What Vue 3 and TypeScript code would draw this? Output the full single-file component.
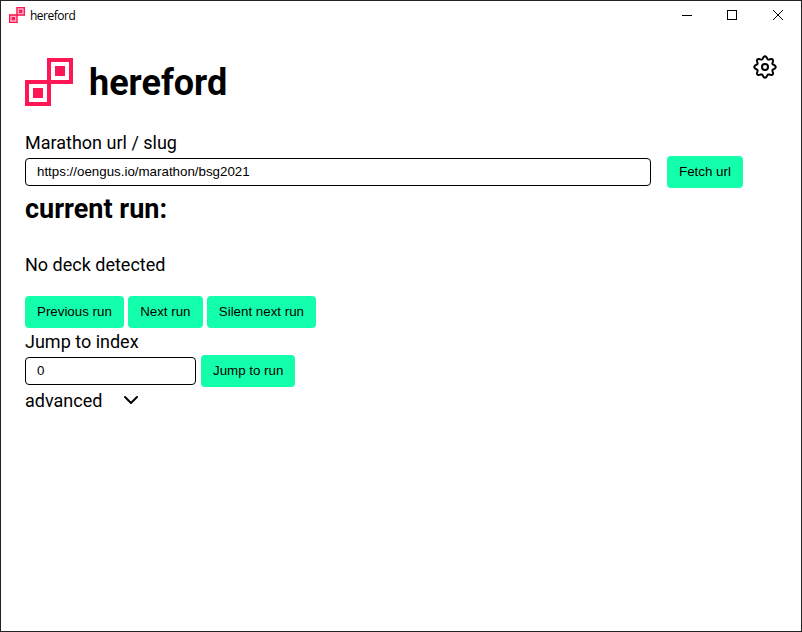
<script setup lang="ts">
import { ref } from 'vue'

const slug = ref<string>('https://oengus.io/marathon/bsg2021')
const index = ref<string>('0')
const runActions: string[] = ['Previous run', 'Next run', 'Silent next run']

// Outline of a cog with eight evenly spaced, rounded teeth.
const cogOutline: string = Array.from({ length: 96 }, (_, i) => {
  const angle = (i / 96) * Math.PI * 2
  const radius = 9.4 + 1.35 * Math.cos(8 * angle)
  return `${(12 + radius * Math.sin(angle)).toFixed(2)},${(12 - radius * Math.cos(angle)).toFixed(2)}`
}).join(' ')
</script>

<template>
  <div class="window">
    <header class="titlebar">
      <svg class="app-icon" viewBox="0 0 48 48">
        <path class="halo" d="M22 0h26v26H22zM0 22h26v26H0z" />
        <path class="frame" d="M24 2h22v22H24zM2 24h22v22H2z" />
        <path class="core" d="M30 8h10v10H30zM8 30h10v10H8z" />
      </svg>
      <span class="caption">hereford</span>
      <div class="controls">
        <svg viewBox="0 0 46 30" shape-rendering="crispEdges"><path d="M19 14.5h10" /></svg>
        <svg viewBox="0 0 46 30" shape-rendering="crispEdges"><path d="M18.5 9.5h9v9h-9z" /></svg>
        <svg viewBox="0 0 46 30"><path d="M18 9l10 10M28 9L18 19" /></svg>
      </div>
    </header>

    <main class="content">
      <div class="brand">
        <svg class="logo" viewBox="0 0 48 48" shape-rendering="crispEdges">
          <path class="frame" d="M24 2h22v22H24zM2 24h22v22H2z" />
          <path class="core" d="M30 8h10v10H30zM8 30h10v10H8z" />
        </svg>
        <h1>hereford</h1>
        <svg class="icon gear" viewBox="0 0 24 24">
          <circle cx="12" cy="12" r="3" />
          <polygon :points="cogOutline" />
        </svg>
      </div>

      <label class="label" for="slug">Marathon url / slug</label>
      <div class="row url-row">
        <input id="slug" v-model="slug" class="field" type="text" />
        <button class="btn">Fetch url</button>
      </div>

      <h2>current run:</h2>
      <p class="status">No deck detected</p>

      <div class="row actions">
        <button v-for="action in runActions" :key="action" class="btn">{{ action }}</button>
      </div>

      <label class="label jump-label" for="index">Jump to index</label>
      <div class="row jump-row">
        <input id="index" v-model="index" class="field" type="text" />
        <button class="btn">Jump to run</button>
      </div>

      <div class="advanced">
        <span>advanced</span>
        <svg class="icon chevron" viewBox="0 0 24 24"><polyline points="6 9 12 15 18 9" /></svg>
      </div>
    </main>
  </div>
</template>

<style>
body {
  margin: 0;
  background: #fff;
}
</style>

<style scoped>
.window {
  box-sizing: border-box;
  width: 802px;
  height: 632px;
  border: 1px solid #232225;
  background: #fff;
  color: #000;
  font-family: Roboto, sans-serif;
  font-size: 18px;
  overflow: hidden;
}
.titlebar {
  display: flex;
  align-items: center;
  height: 30px;
  padding-left: 8px;
}
.app-icon {
  width: 16px;
  height: 16px;
  margin-top: -2px;
}
.caption {
  margin-left: 5px;
  font: 12px/16px "Open Sans", "Noto Sans", sans-serif;
  letter-spacing: -0.5px;
}
.controls {
  display: flex;
  margin-left: auto;
}
.controls svg {
  width: 46px;
  height: 30px;
  fill: none;
  stroke: #000;
}
.frame {
  fill: none;
  stroke: #ff1654;
  stroke-width: 4;
}
.core {
  fill: #ff1654;
}
.halo {
  fill: #ffb3c6;
}
.content {
  padding: 27px 24px 0;
}
.brand {
  display: flex;
  height: 48px;
}
.logo {
  width: 48px;
  height: 48px;
}
h1 {
  margin: 0 0 0 16px;
  font-size: 36px;
  line-height: 50px;
  font-weight: 700;
}
.icon {
  width: 24px;
  height: 24px;
  fill: none;
  stroke: #000;
  stroke-width: 2;
  stroke-linecap: round;
  stroke-linejoin: round;
}
.gear {
  margin: -3px 0 0 auto;
}
.label {
  display: block;
  margin-top: 26px;
  line-height: 22px;
}
.row {
  display: flex;
  align-items: center;
  height: 32px;
}
.url-row {
  margin-top: 2px;
  gap: 16px;
}
.url-row .field {
  width: 626px;
}
.field {
  box-sizing: border-box;
  height: 28px;
  margin: 0;
  padding: 0 11px 1px;
  border: 1px solid #000;
  border-radius: 4px;
  background: #fff;
  color: #000;
  font: 13.333px "Liberation Sans", Arial, sans-serif;
}
.btn {
  height: 32px;
  margin: 0;
  padding: 0 12px 1px;
  border: 0;
  border-radius: 4px;
  background: #14ffab;
  color: #000;
  font: 13.333px "Liberation Sans", Arial, sans-serif;
  white-space: nowrap;
}
h2 {
  margin: 5px 0 0;
  font-size: 27px;
  line-height: 32px;
  font-weight: 700;
}
.status {
  margin: 29px 0 0;
  line-height: 22px;
}
.actions {
  margin-top: 20px;
  gap: 4.3px;
}
.jump-label {
  margin-top: 3px;
}
.jump-row {
  margin-top: 2px;
  gap: 5px;
}
.jump-row .field {
  width: 171px;
}
.advanced {
  display: flex;
  align-items: center;
  gap: 16px;
  height: 24px;
  margin-top: 1px;
}
.chevron {
  margin-left: 0.5px;
}
</style>
